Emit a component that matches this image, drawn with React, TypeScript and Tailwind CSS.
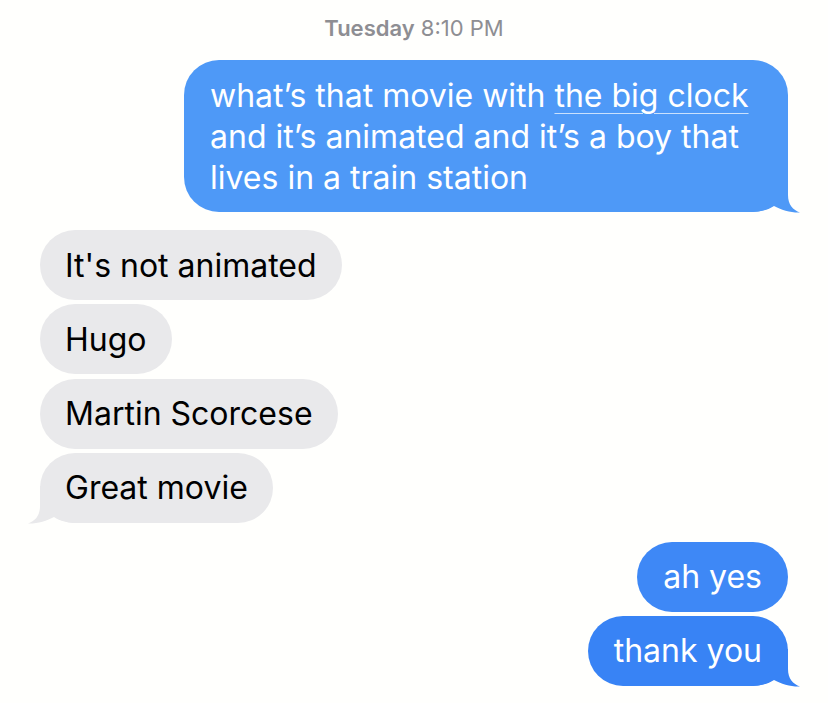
import React from "react";

function Tail({ side, color }: { side: "left" | "right"; color: string }) {
  return (
    <svg
      width="50"
      height="38"
      viewBox="0 0 50 38"
      className={
        side === "right"
          ? "absolute right-[-12px] bottom-[-1px] overflow-visible"
          : "absolute left-[-12px] bottom-[-1px] overflow-visible -scale-x-100"
      }
    >
      <path
        d="M0 0 L38 0 L38 20 C38 30 43 35 50 37.5 C42 38 31 35 24 31 C18 35 10 37 0 37 Z"
        fill={color}
      />
    </svg>
  );
}

function Sent({
  children,
  color,
  tail,
  wide,
}: {
  children: React.ReactNode;
  color: string;
  tail?: boolean;
  wide?: boolean;
}) {
  return (
    <div className="flex justify-end">
      <div
        className={`relative rounded-[35px] px-[26px] py-[14.5px] text-white ${wide ? "w-[604px]" : ""}`}
        style={{ backgroundColor: color }}
      >
        <span className="relative z-10">{children}</span>
        {tail && <Tail side="right" color={color} />}
      </div>
    </div>
  );
}

function Received({ children, tail }: { children: React.ReactNode; tail?: boolean }) {
  return (
    <div className="flex justify-start">
      <div className="relative rounded-[35px] bg-[#e9e9eb] px-[25px] py-[14.5px] text-black">
        <span className="relative z-10">{children}</span>
        {tail && <Tail side="left" color="#e9e9eb" />}
      </div>
    </div>
  );
}

export default function App() {
  return (
    <div className="min-h-screen w-[828px] bg-[#fffffd] px-[40px] pt-[13px] font-['Inter','Liberation_Sans',sans-serif] text-[32px] leading-[41px]">
      <p className="text-center text-[22px] leading-[30px] text-[#8e8e93]">
        <span className="font-semibold">Tuesday</span> 8:10 PM
      </p>

      <div className="mt-[17px]">
        <Sent color="#4e99f7" tail wide>
          what’s that movie with{" "}
          <span className="underline decoration-1 decoration-white/70 underline-offset-[6px]">
            the big clock
          </span>{" "}
          and it’s animated and it’s a boy that lives in a train station
        </Sent>
      </div>

      <div className="mt-[18px] flex flex-col gap-[4.3px]">
        <Received>It's not animated</Received>
        <Received>Hugo</Received>
        <Received>Martin Scorcese</Received>
        <Received tail>Great movie</Received>
      </div>

      <div className="mt-[19px] flex flex-col gap-[4px]">
        <Sent color="#3e88f6">ah yes</Sent>
        <Sent color="#3883f5" tail>
          thank you
        </Sent>
      </div>
    </div>
  );
}
